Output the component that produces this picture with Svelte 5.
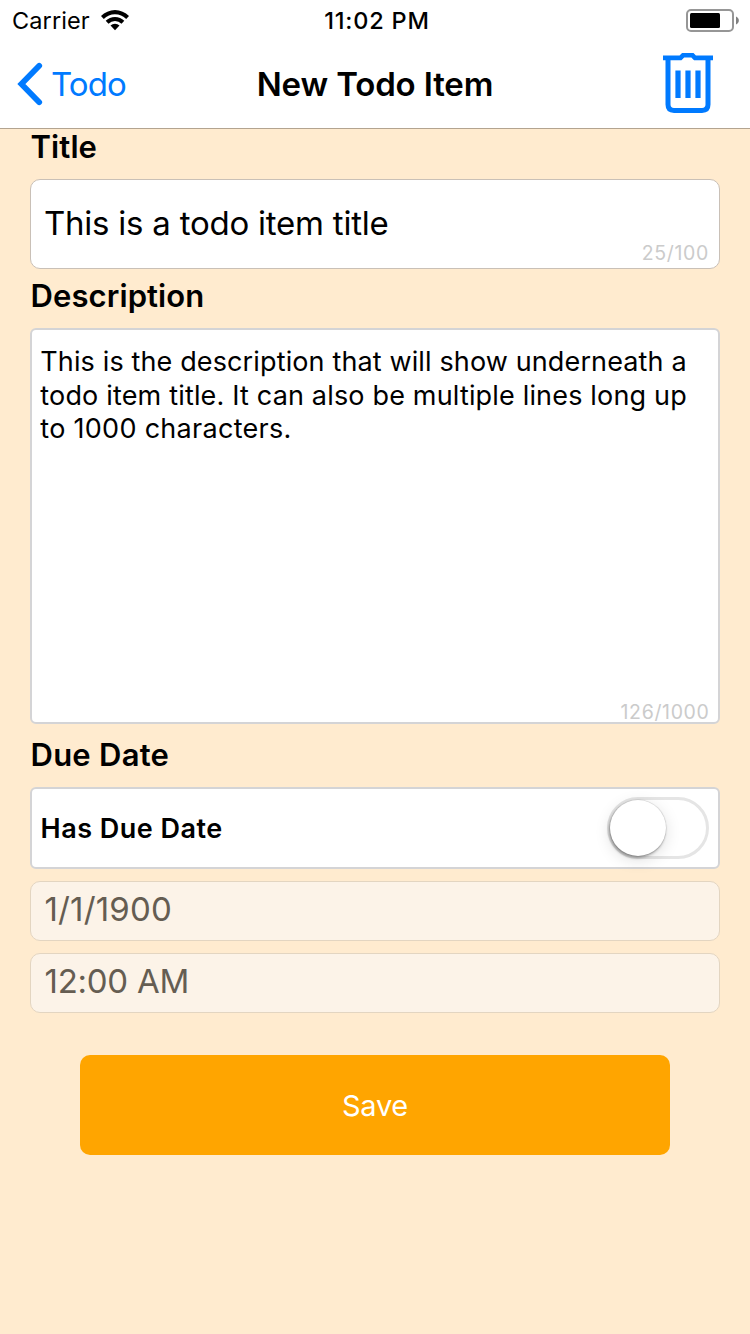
<script>
  let title = 'This is a todo item title';
  let descriptionLines = [
    { text: 'This is the description that will show underneath a', spacing: 0.13 },
    { text: 'todo item title. It can also be multiple lines long up', spacing: 0.17 },
    { text: 'to 1000 characters.', spacing: 0.29 }
  ];
</script>

<div class="screen">
  <header>
    <div class="status">
      <div class="carrier">
        <span class="t-carrier">Carrier</span>
        <svg width="28" height="21" viewBox="0 0 28 21" aria-hidden="true">
          <path d="M0 6 A19.6 19.6 0 0 1 28 6 L25.2 9 A15.7 15.7 0 0 0 2.8 9Z" />
          <path d="M4.7 10.8 A13 13 0 0 1 23.3 10.8 L20.5 13.8 A9.2 9.2 0 0 0 7.5 13.8Z" />
          <path d="M9.5 15.6 A6.4 6.4 0 0 1 18.5 15.6 L14 20.3Z" />
        </svg>
      </div>
      <span class="t-time">11:02 PM</span>
      <svg class="battery" width="54" height="24" viewBox="0 0 54 24" aria-hidden="true">
        <rect x="1" y="1" width="46" height="21" rx="4" fill="none" stroke="#969696" stroke-width="2" />
        <rect x="4" y="4" width="30" height="15" rx="1.5" />
        <path d="M50 7.5 C53.8 9 53.8 14 50 15.5Z" fill="#808080" />
      </svg>
    </div>
    <nav>
      <button class="back">
        <svg width="26" height="44" viewBox="0 0 26 44" aria-hidden="true">
          <path d="M22.2 3.8 L4.4 22 L22.2 40.2" fill="none" stroke="#007aff" stroke-width="5.8" stroke-linecap="round" stroke-linejoin="miter" />
        </svg>
        <span class="t-back">Todo</span>
      </button>
      <h1><span>New Todo Item</span></h1>
      <button class="trash" aria-label="Delete">
        <svg width="50" height="60" viewBox="0 0 50 60" fill="none" stroke="#007aff">
          <path d="M0 4.9 H17.5 L20 2.3 H29.5 L32 4.9 H50" stroke-width="4.6" />
          <path d="M5 5 V51.5 Q5 57.4 11 57.4 H39 Q45 57.4 45 51.5 V5" stroke-width="5" />
          <path d="M15 17.4 V45 M25 17.4 V45 M35 17.4 V45" stroke-width="5.2" />
        </svg>
      </button>
    </nav>
  </header>

  <main>
    <h2 class="first"><span class="l-title">Title</span></h2>
    <div class="field title-field">
      <span class="t-title">{title}</span>
      <span class="count c1">25/100</span>
    </div>

    <h2><span class="l-desc">Description</span></h2>
    <div class="box description">
      <p>
        {#each descriptionLines as line}
          <span style="letter-spacing: {line.spacing}px">{line.text}</span>
        {/each}
      </p>
      <span class="count c2">126/1000</span>
    </div>

    <h2 class="due"><span class="l-due">Due Date</span></h2>
    <div class="box due-row">
      <span class="t-has">Has Due Date</span>
      <div class="switch"><div class="thumb"></div></div>
    </div>
    <div class="field disabled"><span class="t-date">1/1/1900</span></div>
    <div class="field disabled"><span class="t-hour">12:00 AM</span></div>

    <button class="save"><span>Save</span></button>
  </main>
</div>

<style>
  :global(body) { margin: 0; background: #ffebcf; }
  .screen {
    width: 750px;
    height: 1334px;
    background: #ffebcf;
    font-family: Inter, sans-serif;
    color: #000;
    overflow: hidden;
  }
  * { box-sizing: border-box; }
  span { white-space: nowrap; }
  button { border: 0; background: none; padding: 0; margin: 0; font-family: inherit; }
  svg { display: block; flex: none; }
  header { height: 129px; background: #fff; border-bottom: 1px solid #b3a490; }
  .status {
    height: 40px;
    display: grid;
    grid-template-columns: 1fr auto 1fr;
    align-items: center;
    padding: 2px 10px 0 12px;
    font-size: 23.5px;
    line-height: 38px;
  }
  .carrier { display: flex; align-items: center; gap: 11.5px; }
  .carrier svg { margin-top: -2px; }
  .battery { justify-self: end; }
  .t-carrier { letter-spacing: 0.1px; }
  .t-time { font-weight: 500; letter-spacing: 0.8px; margin-left: 2px; }
  nav {
    height: 88px;
    display: grid;
    grid-template-columns: 1fr auto 1fr;
    align-items: center;
    padding: 0 37px;
  }
  .back { display: flex; align-items: center; gap: 8px; margin-left: -20px; color: #007aff; font-size: 33px; }
  .t-back { letter-spacing: -0.9px; }
  h1 { margin: 0; font-size: 33px; line-height: 40px; font-weight: 600; letter-spacing: -0.15px; }
  .trash { justify-self: end; height: 64px; padding-bottom: 2px; }
  main { display: flex; flex-direction: column; padding: 0 30px; }
  h2 { margin: 0; height: 59px; padding: 8px 0 0 0.5px; font-size: 31px; line-height: 38px; font-weight: 600; letter-spacing: 0.1px; }
  h2.first { height: 50px; padding-top: 0; line-height: 36px; }
  h2.due { height: 63px; padding-top: 12px; letter-spacing: 0.25px; }
  .field { border: 1px solid #c9c0b7; border-radius: 10px; background: #fff; font-size: 33px; }
  .title-field {
    height: 90px;
    display: grid;
    grid-template-columns: 1fr auto;
    padding: 0 10px 0 13px;
    line-height: 86px;
  }
  .t-title { letter-spacing: -0.23px; }
  .count { color: #cbcbcb; font-size: 19.5px; line-height: 24px; letter-spacing: 0.65px; align-self: end; }
  .c1 { margin-bottom: 3px; }
  .box { border: 2px solid #d4d4d6; border-radius: 6px; background: #fff; }
  .description {
    height: 396px;
    display: flex;
    flex-direction: column;
    justify-content: space-between;
    padding: 15px 8.5px 0 8.3px;
  }
  .description p { margin: 0; font-size: 27px; line-height: 33.5px; }
  .description p span { display: block; }
  .c2 { margin-bottom: -2px; }
  .due-row {
    height: 82px;
    display: flex;
    align-items: center;
    justify-content: space-between;
    padding: 0 9px 0 8.5px;
    font-size: 27px;
    font-weight: 600;
    letter-spacing: 0.5px;
    margin-bottom: 12px;
  }
  .switch {
    width: 102px;
    height: 62px;
    border: 3px solid #e5e5e5;
    border-radius: 31px;
  }
  .thumb {
    width: 56px;
    height: 56px;
    border-radius: 50%;
    background: #fff;
    box-shadow: 0 0 1px 0.5px rgba(0, 0, 0, 0.15), -1px 2px 3px rgba(0, 0, 0, 0.32), 0 4px 16px rgba(0, 0, 0, 0.13);
  }
  .disabled {
    height: 60px;
    line-height: 54px;
    padding-left: 13.5px;
    margin-bottom: 12px;
    background: #fcf3e8;
    border-color: #e3d5c1;
    color: #655d52;
  }
  .t-date { letter-spacing: 0.15px; }
  .t-hour { letter-spacing: -0.25px; }
  .save {
    height: 100px;
    margin: 30px 50px 0;
    padding-top: 2px;
    border-radius: 10px;
    background: #ffa500;
    color: #fff;
    font-size: 29px;
    line-height: 98px;
    letter-spacing: -0.3px;
  }
</style>
